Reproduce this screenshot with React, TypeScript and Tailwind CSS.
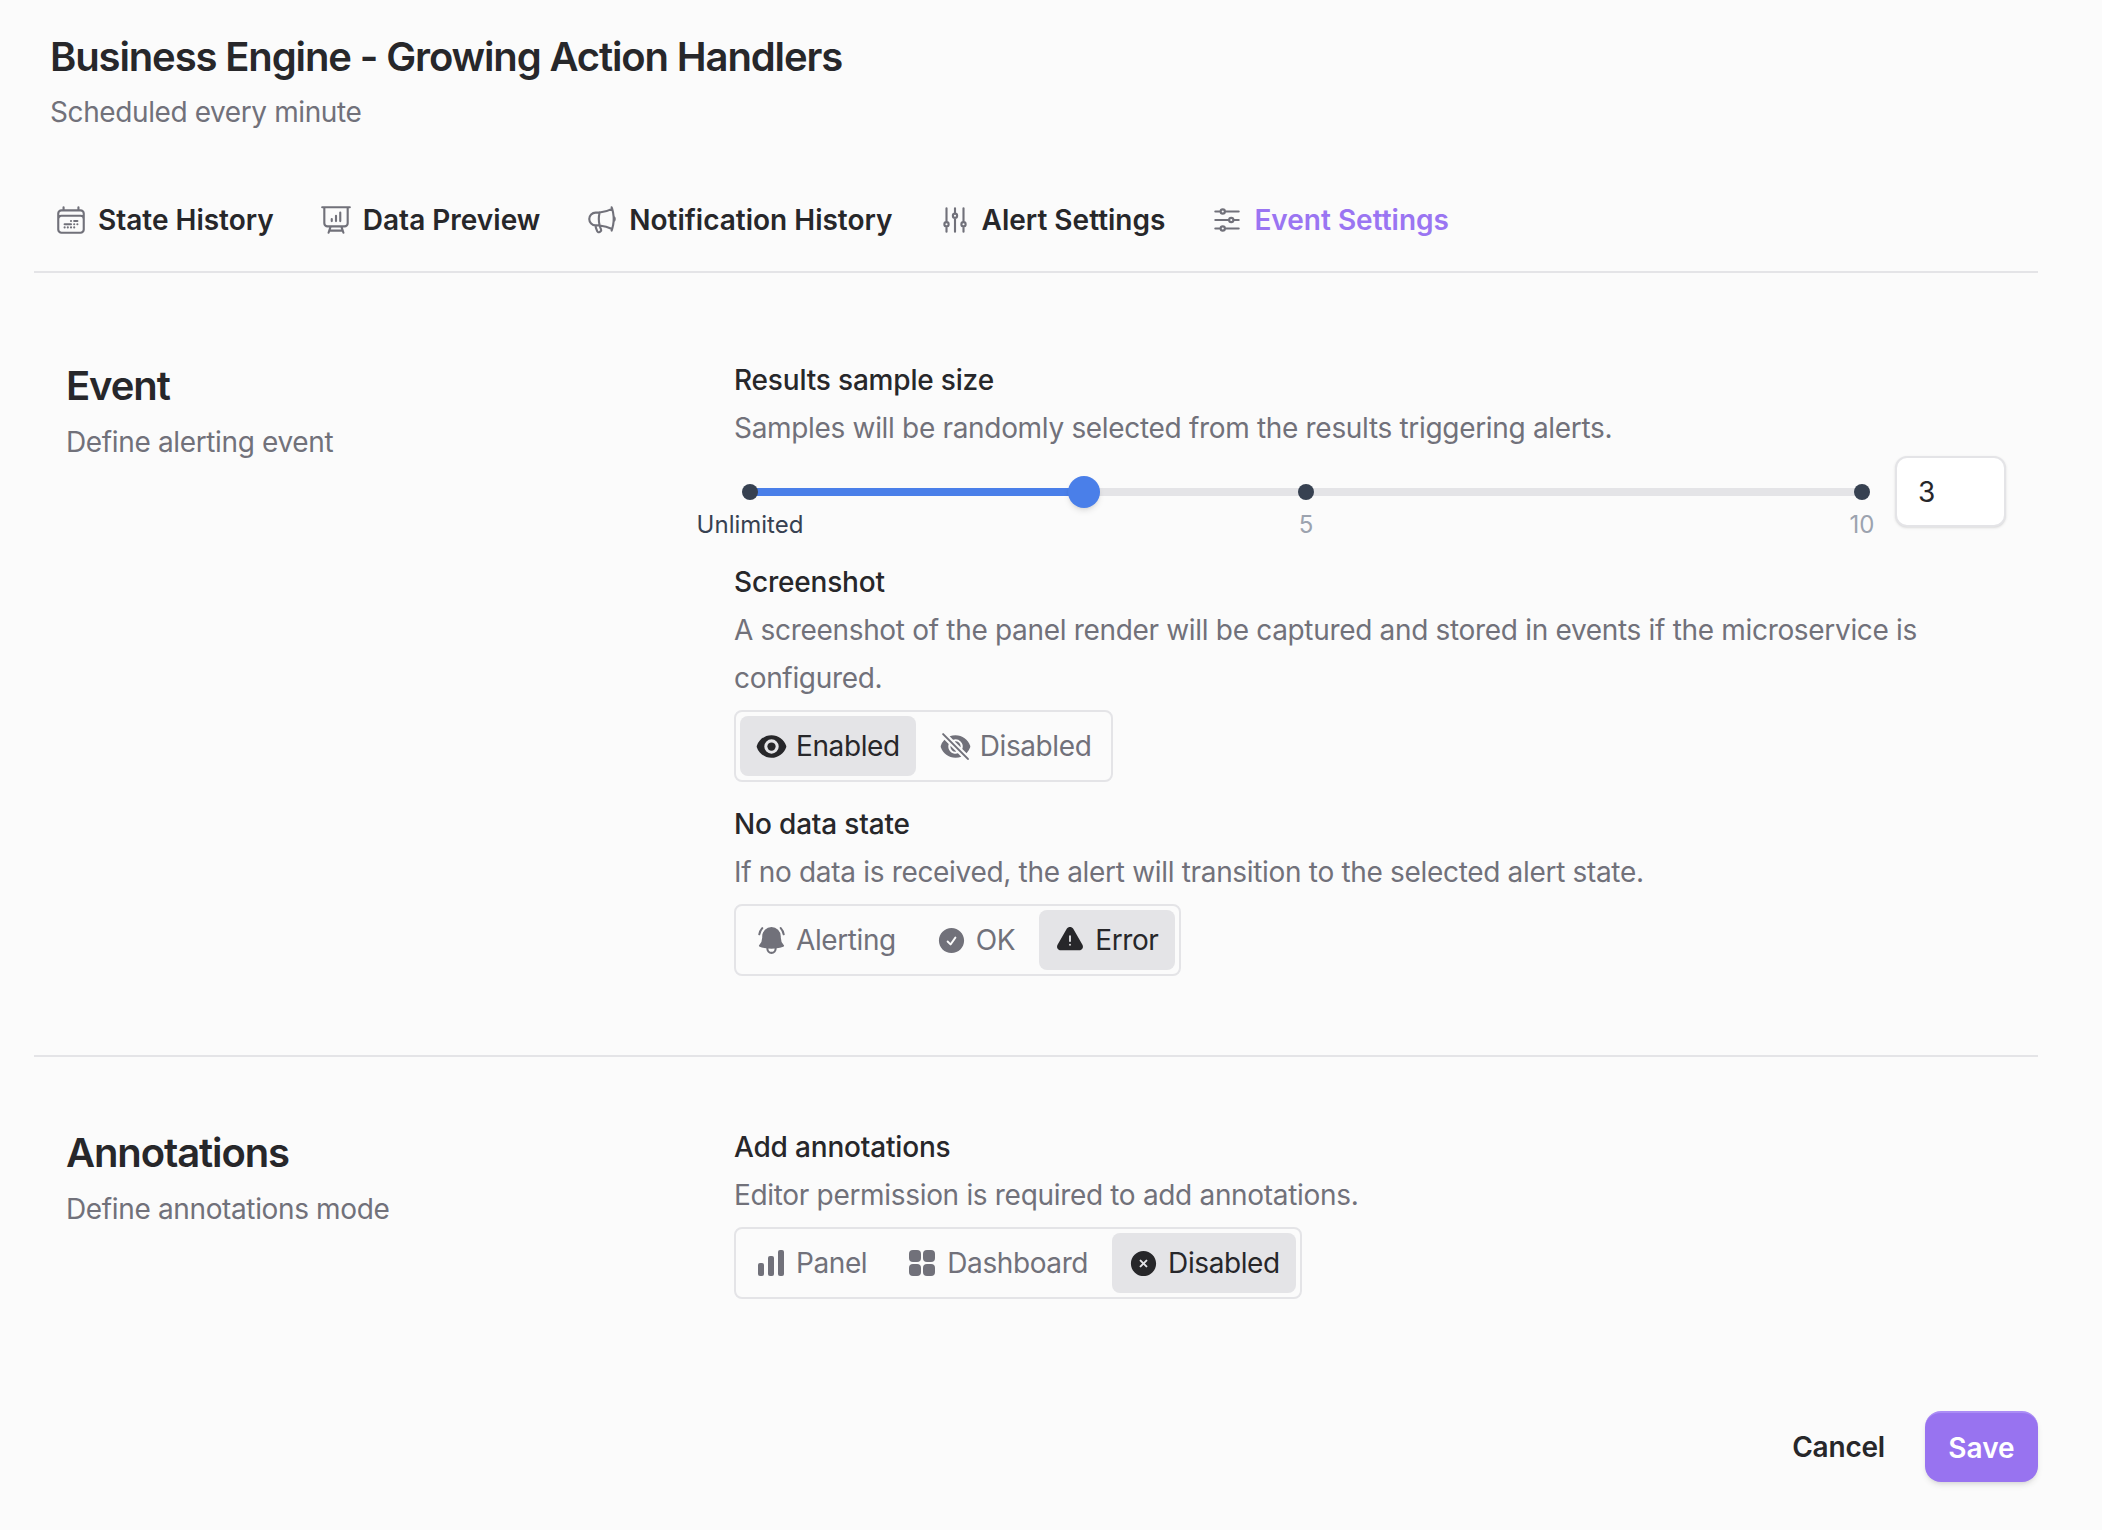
import type { ComponentType, ReactNode } from "react";
import {
  HiOutlineCalendarDateRange,
  HiOutlinePresentationChartBar,
  HiOutlineMegaphone,
  HiOutlineAdjustmentsVertical,
  HiOutlineAdjustmentsHorizontal,
  HiEye,
  HiEyeSlash,
  HiBellAlert,
  HiCheckCircle,
  HiExclamationTriangle,
  HiXCircle,
} from "react-icons/hi2";

type IconType = ComponentType<{ className?: string }>;

function BarsIcon({ className }: { className?: string }) {
  return (
    <svg viewBox="0 0 26 26" fill="currentColor" className={className}>
      <rect x="0" y="13" width="6" height="13" rx="2" />
      <rect x="10" y="6" width="6" height="20" rx="2" />
      <rect x="20" y="0" width="6" height="26" rx="2" />
    </svg>
  );
}

function GridIcon({ className }: { className?: string }) {
  return (
    <svg viewBox="0 0 26 26" fill="currentColor" className={className}>
      <rect x="0" y="0" width="12" height="12" rx="4" />
      <rect x="14" y="0" width="12" height="12" rx="4" />
      <rect x="0" y="14" width="12" height="12" rx="4" />
      <rect x="14" y="14" width="12" height="12" rx="4" />
    </svg>
  );
}

const tabs: { label: string; icon: IconType; active?: boolean }[] = [
  { label: "State History", icon: HiOutlineCalendarDateRange },
  { label: "Data Preview", icon: HiOutlinePresentationChartBar },
  { label: "Notification History", icon: HiOutlineMegaphone },
  { label: "Alert Settings", icon: HiOutlineAdjustmentsVertical },
  { label: "Event Settings", icon: HiOutlineAdjustmentsHorizontal, active: true },
];

function Toggle({
  options,
}: {
  options: { label: string; icon: IconType; iconClass: string; active?: boolean }[];
}) {
  return (
    <div className="mt-2 inline-flex h-[72px] gap-2 rounded-lg border-2 border-[#e4e4e7] p-1 tracking-[-0.4px]">
      {options.map((o) => (
        <div
          key={o.label}
          className={
            o.active
              ? "flex h-[60px] items-center gap-[8px] rounded-lg bg-[#e4e4e7] pr-[16px] pl-[15px] text-[#27272a]"
              : "flex h-[60px] items-center gap-[8px] rounded-lg pr-[16px] pl-[15px] text-[#71717a]"
          }
        >
          <o.icon className={o.iconClass} />
          <span>{o.label}</span>
        </div>
      ))}
    </div>
  );
}

function Field({ label, children }: { label: string; children: ReactNode }) {
  return (
    <div>
      <div className="text-[28px] leading-[40px] font-medium tracking-[-0.18px] text-[#27272a]">{label}</div>
      <p className="mt-1 text-[28px] leading-[48px] tracking-[-0.32px] text-[#71717a]">{children}</p>
    </div>
  );
}

function SectionTitle({ title, sub }: { title: string; sub: string }) {
  return (
    <div>
      <h2 className="text-[40px] leading-[56px] font-semibold tracking-[-1.1px] text-[#27272a]">{title}</h2>
      <p className="mt-2 text-[28px] leading-[40px] tracking-[-0.36px] text-[#71717a]">{sub}</p>
    </div>
  );
}

function SampleSlider() {
  return (
    <div className="mt-1 flex items-start">
      <div className="relative h-[71px] w-[1161px]">
        <div className="absolute top-[32px] right-[33px] left-[16px] h-2 bg-[#e4e4e7]" />
        <div className="absolute top-[32px] left-[16px] h-2 w-[334px] bg-[#4a7fe9]" />
        <div className="absolute top-[28px] left-[8px] size-4 rounded-full bg-[#374151]" />
        <div className="absolute top-[28px] left-[564px] size-4 rounded-full bg-[#374151]" />
        <div className="absolute top-[28px] left-[1120px] size-4 rounded-full bg-[#374151]" />
        <div className="absolute top-[20px] left-[334px] size-8 rounded-full bg-[#4a7fe9] shadow-md" />
        <span className="absolute top-[53px] left-[16px] -translate-x-1/2 text-[24px] leading-[32px] text-[#374151]">
          Unlimited
        </span>
        <span className="absolute top-[53px] left-[572px] -translate-x-1/2 text-[24px] leading-[32px] text-[#9ca3af]">
          5
        </span>
        <span className="absolute top-[53px] left-[1128px] -translate-x-1/2 text-[24px] leading-[32px] text-[#9ca3af]">
          10
        </span>
      </div>
      <div className="flex h-[71px] w-[111px] items-center rounded-xl border-2 border-[#e4e4e7] bg-white pl-[21px] text-[28px] text-[#27272a] shadow-sm">
        3
      </div>
    </div>
  );
}

export default function App() {
  return (
    <div className="min-h-[1530px] bg-[#fbfbfb] pr-[64px] pl-[34px] font-[family-name:Inter,sans-serif] text-[28px]">
      <header className="pt-[29px] pl-4">
        <h1 className="text-[40px] leading-[56px] font-semibold tracking-[-1.13px] text-[#27272a]">
          Business Engine - Growing Action Handlers
        </h1>
        <p className="mt-[7px] text-[28px] leading-[40px] tracking-[-0.4px] text-[#71717a]">Scheduled every minute</p>
      </header>

      <nav className="mt-[68px] flex gap-[45px] border-b-2 border-[#e4e4e7] pb-[31px] pl-[20px]">
        {tabs.map((t) => (
          <div key={t.label} className="flex items-center gap-[10px] leading-[40px] font-semibold">
            <t.icon className="size-[34px] text-[#71717a]" />
            <span className={t.active ? "text-[#9a75f2]" : "text-[#27272a]"}>{t.label}</span>
          </div>
        ))}
      </nav>

      <section className="grid grid-cols-[668px_1fr] border-b-2 border-[#e4e4e7] px-8 pt-[85px] pb-[79px]">
        <SectionTitle title="Event" sub="Define alerting event" />
        <div className="pt-[2px]">
          <Field label="Results sample size">
            Samples will be randomly selected from the results triggering alerts.
          </Field>
          <SampleSlider />
          <div className="mt-[35px]">
            <Field label="Screenshot">
              A screenshot of the panel render will be captured and stored in events if the microservice is configured.
            </Field>
            <Toggle
              options={[
                { label: "Enabled", icon: HiEye, iconClass: "size-[33px]", active: true },
                { label: "Disabled", icon: HiEyeSlash, iconClass: "size-[33px]" },
              ]}
            />
          </div>
          <div className="mt-[22px]">
            <Field label="No data state">
              If no data is received, the alert will transition to the selected alert state.
            </Field>
            <Toggle
              options={[
                { label: "Alerting", icon: HiBellAlert, iconClass: "size-[33px]" },
                { label: "OK", icon: HiCheckCircle, iconClass: "mx-px size-[31px]" },
                { label: "Error", icon: HiExclamationTriangle, iconClass: "mr-[2px] ml-px size-[30px]", active: true },
              ]}
            />
          </div>
        </div>
      </section>

      <section className="grid grid-cols-[668px_1fr] px-8 pt-[68px]">
        <SectionTitle title="Annotations" sub="Define annotations mode" />
        <div className="pt-[2px]">
          <Field label="Add annotations">Editor permission is required to add annotations.</Field>
          <Toggle
            options={[
              { label: "Panel", icon: BarsIcon, iconClass: "mr-1 ml-[3px] size-[26px]" },
              { label: "Dashboard", icon: GridIcon, iconClass: "mr-1 ml-[3px] size-[26px]" },
              { label: "Disabled", icon: HiXCircle, iconClass: "mx-px size-[31px]", active: true },
            ]}
          />
        </div>
      </section>

      <div className="mt-[112px] flex items-center justify-end gap-[40px] font-semibold">
        <span className="tracking-[-0.2px] text-[#27272a]">Cancel</span>
        <button className="h-[71px] w-[113px] rounded-2xl border-t-2 border-[#ab8df5] bg-[#9873f0] text-white shadow-md">
          Save
        </button>
      </div>
    </div>
  );
}
